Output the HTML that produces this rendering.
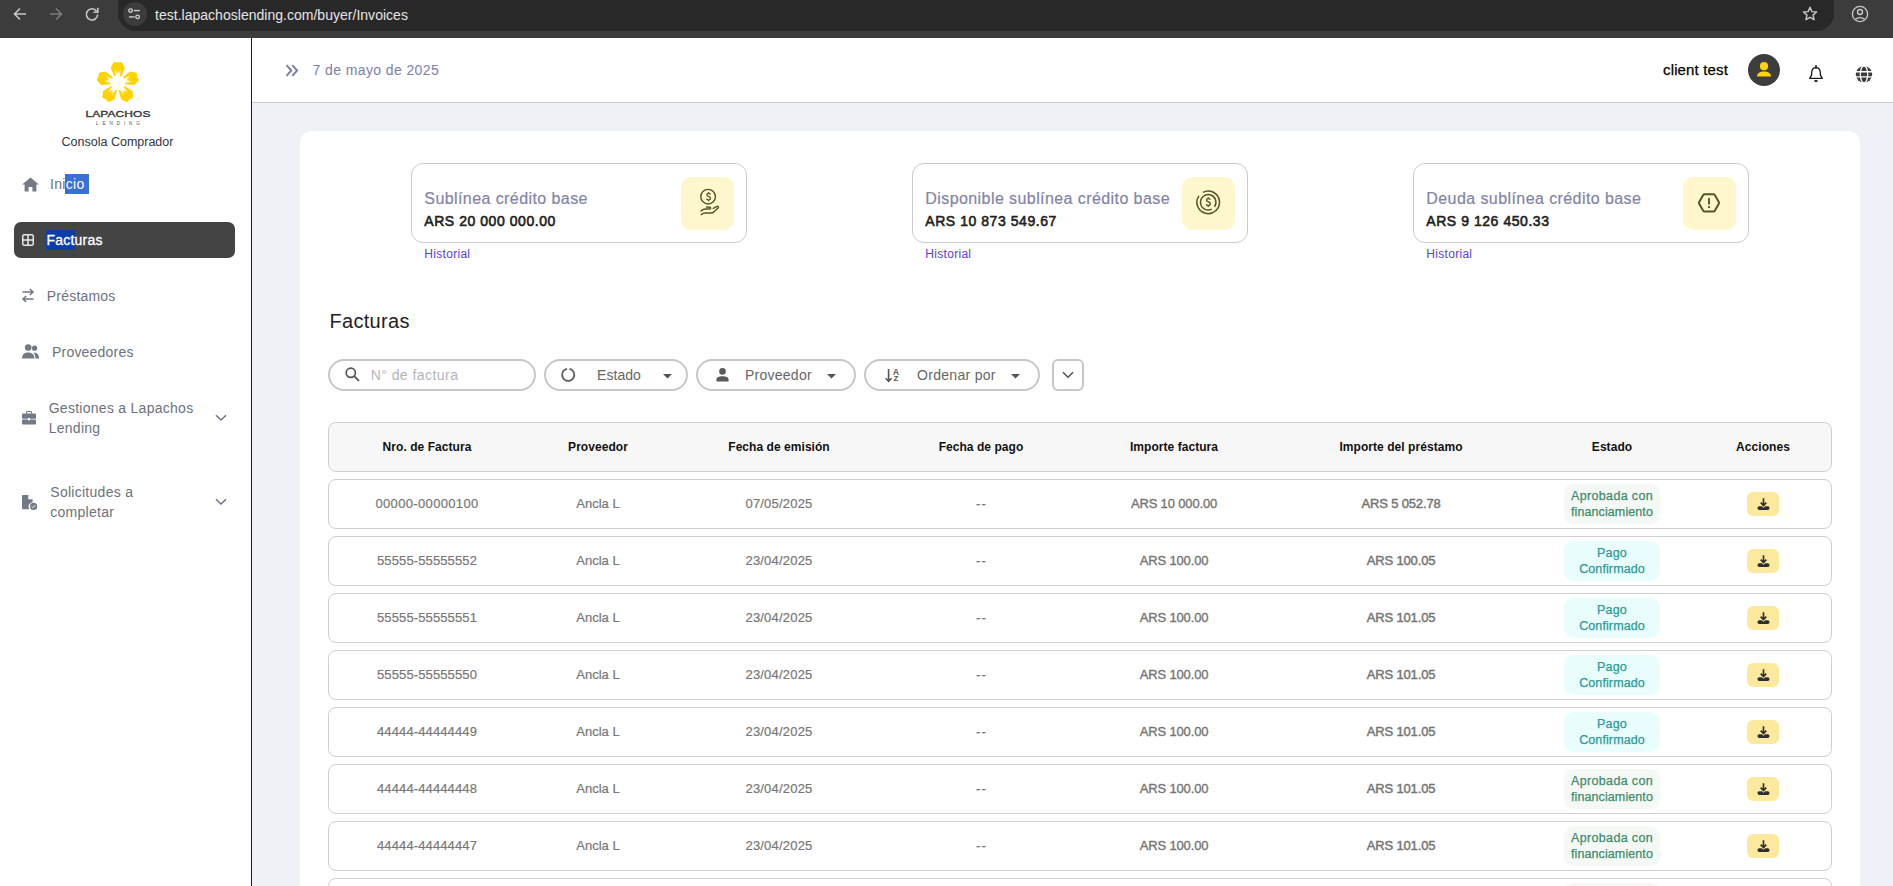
<!DOCTYPE html>
<html><head><meta charset="utf-8">
<style>
*{box-sizing:border-box;margin:0;padding:0}
html,body{width:1893px;height:886px;overflow:hidden;background:#fff;font-family:"Liberation Sans",sans-serif}
.abs{position:absolute}
svg{overflow:visible}
</style></head><body>
<div class="abs" style="left:0px;top:0px;width:1893px;height:38px;background:#3c3c3c"></div>
<div class="abs" style="left:118px;top:-6px;width:1716px;height:37px;background:#282828;border-radius:0 0 18px 18px"></div>
<div class="abs" style="left:123px;top:2px;width:24px;height:24px;background:#3c3c3c;border-radius:50%"></div>
<svg class="abs" style="left:13px;top:7px" width="14" height="14" viewBox="0 0 14 14"><path d="M13 7H2M7 1.5L1.5 7L7 12.5" fill="none" stroke="#c8c8c8" stroke-width="1.6"/></svg>
<svg class="abs" style="left:49px;top:7px" width="14" height="14" viewBox="0 0 14 14"><path d="M1 7H12M7 1.5L12.5 7L7 12.5" fill="none" stroke="#7c7c7c" stroke-width="1.6"/></svg>
<svg class="abs" style="left:85px;top:7px" width="14" height="14" viewBox="0 0 14 14"><path d="M11.6 4.2A5.6 5.6 0 1 0 12.6 7.5" fill="none" stroke="#c8c8c8" stroke-width="1.6"/><path d="M12.8 0.8V5.2H8.4" fill="none" stroke="#c8c8c8" stroke-width="1.6"/></svg>
<svg class="abs" style="left:128px;top:8px" width="14" height="12" viewBox="0 0 14 12"><circle cx="2.6" cy="2.6" r="1.8" fill="none" stroke="#d0d0d0" stroke-width="1.3"/><path d="M6 2.6H11.8" stroke="#d0d0d0" stroke-width="1.4"/><circle cx="9.6" cy="8.9" r="1.8" fill="none" stroke="#d0d0d0" stroke-width="1.3"/><path d="M1 8.9H6.6" stroke="#d0d0d0" stroke-width="1.4"/></svg>
<div class="abs " style="left:155px;top:7.65px;font-size:14px;line-height:14px;white-space:nowrap;color:#e6e6e6;letter-spacing:0.02px">test.lapachoslending.com/buyer/Invoices</div>
<svg class="abs" style="left:1802px;top:6px" width="16" height="16" viewBox="0 0 16 16"><path d="M8 1.2L9.9 5.6L14.6 6L11 9.1L12.1 13.7L8 11.3L3.9 13.7L5 9.1L1.4 6L6.1 5.6Z" fill="none" stroke="#c8c8c8" stroke-width="1.4" stroke-linejoin="round"/></svg>
<svg class="abs" style="left:1851px;top:5px" width="18" height="18" viewBox="0 0 18 18"><circle cx="9" cy="9" r="7.6" fill="none" stroke="#c8c8c8" stroke-width="1.35"/><circle cx="9" cy="7" r="2.5" fill="none" stroke="#c8c8c8" stroke-width="1.35"/><path d="M4.4 14.4C5.6 13.2 7.2 12.6 9 12.6C10.8 12.6 12.4 13.2 13.6 14.4" fill="none" stroke="#c8c8c8" stroke-width="1.4"/></svg>
<div class="abs" style="left:0px;top:38px;width:251px;height:848px;background:#fff"></div>
<div class="abs" style="left:251px;top:38px;width:1px;height:848px;background:#1f1f1f"></div>
<svg class="abs" style="left:0;top:0" width="252" height="130" viewBox="0 0 252 130"><polygon points="114.40,76.90 110.70,67.70 113.90,61.90 117.80,62.50 121.70,61.90 124.90,67.70 121.20,76.90" fill="#ffd200"/><polygon points="122.46,77.81 130.06,71.45 136.57,72.70 137.20,76.60 138.98,80.12 134.45,84.96 124.56,84.28" fill="#ffd200"/><polygon points="124.08,85.76 132.48,91.02 133.30,97.60 129.79,99.40 126.99,102.18 120.99,99.37 118.58,89.75" fill="#ffd200"/><polygon points="117.02,89.75 114.61,99.37 108.61,102.18 105.81,99.40 102.30,97.60 103.12,91.02 111.52,85.76" fill="#ffd200"/><polygon points="111.04,84.28 101.15,84.96 96.62,80.12 98.40,76.60 99.03,72.70 105.54,71.45 113.14,77.81" fill="#ffd200"/><circle cx="117.8" cy="82.9" r="7.4" fill="#fff"/><polygon points="115.77,78.20 117.93,77.78 115.03,68.67" fill="#fff"/><polygon points="116.35,77.99 118.55,77.84 116.93,70.43" fill="#fff"/><polygon points="117.05,77.84 119.25,77.99 118.67,70.43" fill="#fff"/><polygon points="117.67,77.78 119.83,78.20 120.57,68.67" fill="#fff"/><polygon points="121.64,79.51 122.71,81.44 130.48,75.87" fill="#fff"/><polygon points="122.02,80.01 122.85,82.05 129.39,78.22" fill="#fff"/><polygon points="122.39,80.62 122.92,82.76 129.93,79.88" fill="#fff"/><polygon points="122.63,81.20 122.90,83.38 132.19,81.13" fill="#fff"/><polygon points="122.21,85.51 120.71,87.11 128.40,92.79" fill="#fff"/><polygon points="121.86,86.02 120.17,87.44 125.83,92.48" fill="#fff"/><polygon points="121.38,86.56 119.52,87.72 124.42,93.50" fill="#fff"/><polygon points="120.91,86.97 118.92,87.90 123.93,96.04" fill="#fff"/><polygon points="116.68,87.90 114.69,86.97 111.67,96.04" fill="#fff"/><polygon points="116.08,87.72 114.22,86.56 111.18,93.50" fill="#fff"/><polygon points="115.43,87.44 113.74,86.02 109.77,92.48" fill="#fff"/><polygon points="114.89,87.11 113.39,85.51 107.20,92.79" fill="#fff"/><polygon points="112.70,83.38 112.97,81.20 103.41,81.13" fill="#fff"/><polygon points="112.68,82.76 113.21,80.62 105.67,79.88" fill="#fff"/><polygon points="112.75,82.05 113.58,80.01 106.21,78.22" fill="#fff"/><polygon points="112.89,81.44 113.96,79.51 105.12,75.87" fill="#fff"/><circle cx="138.5" cy="98.5" r="1" fill="none" stroke="#f3dc7a" stroke-width="0.5"/></svg>
<div class="abs" style="left:68px;width:100px;text-align:center;top:109.1px;font-size:9.8px;line-height:9.8px;color:#3a3a3a;letter-spacing:0.1px;-webkit-text-stroke:0.4px #3a3a3a;transform:scaleX(1.22)">LAPACHOS</div>
<div class="abs" style="left:-32.0px;width:300px;text-align:center;top:121.51px;font-size:4.6px;line-height:4.6px;white-space:nowrap;color:#555;letter-spacing:3.9px;padding-left:3.9px">LENDING</div>
<div class="abs" style="left:-32.5px;width:300px;text-align:center;top:135.62px;font-size:12.5px;line-height:12.5px;white-space:nowrap;color:#2f3542;letter-spacing:0px">Consola Comprador</div>
<svg class="abs" style="left:21.5px;top:176.5px" width="17" height="15" viewBox="0 0 17 15"><path d="M8.5 0.4L0.2 7.6H2.6V14.4H6.6V9.9H10.4V14.4H14.4V7.6H16.8Z" fill="#737985"/></svg>
<div class="abs" style="left:65px;top:174px;width:24px;height:20px;background:#3a6fd8"></div>
<div class="abs " style="left:50px;top:176.95px;font-size:14px;line-height:14px;white-space:nowrap;color:#6b7280;letter-spacing:0.3px">Ini<span style="color:#fff">cio</span></div>
<div class="abs" style="left:14px;top:222px;width:221px;height:36px;background:#444444;border-radius:7px"></div>
<div class="abs" style="left:46px;top:230px;width:29px;height:20px;background:#0c3ea9"></div>
<svg class="abs" style="left:22px;top:234px" width="12" height="12" viewBox="0 0 12 12"><rect x="0.75" y="0.75" width="10.5" height="10.5" rx="1.6" fill="none" stroke="#e8e8e8" stroke-width="1.5"/><path d="M6 1V11M1 6H11" stroke="#e8e8e8" stroke-width="1.5"/></svg>
<div class="abs " style="left:46.6px;top:233.15px;font-size:14px;line-height:14px;white-space:nowrap;color:#fff;letter-spacing:0.2px;-webkit-text-stroke:0.3px #fff">Facturas</div>
<svg class="abs" style="left:21px;top:288px" width="14" height="15" viewBox="0 0 14 15"><path d="M1.5 4H12M8.8 1L12 4L8.8 7" fill="none" stroke="#737985" stroke-width="1.6"/><path d="M12.5 11H2M5.2 8L2 11L5.2 14" fill="none" stroke="#737985" stroke-width="1.6"/></svg>
<div class="abs " style="left:46.8px;top:289.15px;font-size:14px;line-height:14px;white-space:nowrap;color:#6b7280;letter-spacing:0.2px">Préstamos</div>
<svg class="abs" style="left:22px;top:344px" width="18" height="15" viewBox="0 0 18 15"><circle cx="6.2" cy="3.6" r="3.3" fill="#737985"/><circle cx="12.6" cy="4.2" r="2.6" fill="#737985"/><path d="M0 14.6C0 10.6 2.6 8.6 6.2 8.6C9.8 8.6 12.4 10.6 12.4 14.6Z" fill="#737985"/><path d="M11.6 8.8C14.8 8.6 17.2 10.4 17.2 14.6H13.4C13.4 12 12.8 10.2 11.6 8.8Z" fill="#737985"/></svg>
<div class="abs " style="left:52px;top:344.85px;font-size:14px;line-height:14px;white-space:nowrap;color:#6b7280;letter-spacing:0.2px">Proveedores</div>
<svg class="abs" style="left:22px;top:411px" width="14" height="14" viewBox="0 0 14 14"><path d="M4.5 2.6V1.4C4.5 0.8 4.9 0.5 5.4 0.5H8.6C9.1 0.5 9.5 0.8 9.5 1.4V2.6" fill="none" stroke="#737985" stroke-width="1.2"/><rect x="0" y="2.6" width="14" height="5.2" rx="1" fill="#737985"/><rect x="0" y="8.6" width="14" height="5" rx="1" fill="#737985"/><rect x="6" y="7" width="2" height="2.4" fill="#fff"/></svg>
<div class="abs " style="left:48.7px;top:401.15px;font-size:14px;line-height:14px;white-space:nowrap;color:#6b7280;letter-spacing:0.27px">Gestiones a Lapachos</div>
<div class="abs " style="left:48.7px;top:420.95px;font-size:14px;line-height:14px;white-space:nowrap;color:#6b7280;letter-spacing:0.27px">Lending</div>
<svg class="abs" style="left:215px;top:414px" width="12" height="8" viewBox="0 0 12 8"><path d="M1 1.2L6 6L11 1.2" fill="none" stroke="#6b7280" stroke-width="1.5"/></svg>
<svg class="abs" style="left:22px;top:494.6px" width="17" height="16" viewBox="0 0 17 16"><path d="M0 1.2C0 0.5 0.5 0 1.2 0H6.6L10.6 4V7.2A4.4 4.4 0 0 0 7.4 14.2H1.2C0.5 14.2 0 13.7 0 13Z" fill="#737985"/><path d="M6.6 0V4H10.6" fill="#fff" stroke="#fff" stroke-width="0.6"/><circle cx="11.6" cy="11.4" r="3.6" fill="#737985"/><path d="M9.9 11.4L11.1 12.6L13.3 10.2" fill="none" stroke="#fff" stroke-width="1"/></svg>
<div class="abs " style="left:50.3px;top:484.75px;font-size:14px;line-height:14px;white-space:nowrap;color:#6b7280;letter-spacing:0.27px">Solicitudes a</div>
<div class="abs " style="left:50.3px;top:504.55px;font-size:14px;line-height:14px;white-space:nowrap;color:#6b7280;letter-spacing:0.27px">completar</div>
<svg class="abs" style="left:215px;top:498px" width="12" height="8" viewBox="0 0 12 8"><path d="M1 1.2L6 6L11 1.2" fill="none" stroke="#6b7280" stroke-width="1.5"/></svg>
<div class="abs" style="left:252px;top:38px;width:1641px;height:64px;background:#fff"></div>
<div class="abs" style="left:252px;top:102px;width:1641px;height:1px;background:#cdcdcd"></div>
<svg class="abs" style="left:285px;top:63.6px" width="14" height="13" viewBox="0 0 14 13"><path d="M1.5 1.2L6.3 6.5L1.5 11.8M7.3 1.2L12.1 6.5L7.3 11.8" fill="none" stroke="#7d80a8" stroke-width="2"/></svg>
<div class="abs " style="left:312.5px;top:63.15px;font-size:14px;line-height:14px;white-space:nowrap;color:#7d80a8;letter-spacing:0.4px">7 de mayo de 2025</div>
<div class="abs " style="left:1663px;top:61.90px;font-size:15px;line-height:15px;white-space:nowrap;color:#000;letter-spacing:0.15px;-webkit-text-stroke:0.25px #000">client test</div>
<div class="abs" style="left:1748px;top:54px;width:32px;height:32px;background:#3d3d3d;border-radius:50%"></div>
<svg class="abs" style="left:1757px;top:62px" width="14" height="16" viewBox="0 0 14 16"><circle cx="7" cy="4.2" r="4.1" fill="#ffd400"/><path d="M0 14.6C0 11 3 9.4 7 9.4C11 9.4 14 11 14 14.6Z" fill="#ffd400"/></svg>
<svg class="abs" style="left:1808px;top:65px" width="16" height="18" viewBox="0 0 16 18"><path d="M8 2.6C5.4 2.6 3.9 4.6 3.7 7.2L3.5 10.4L1.6 13.3H14.4L12.5 10.4L12.3 7.2C12.1 4.6 10.6 2.6 8 2.6Z" fill="none" stroke="#1a1a1a" stroke-width="1.35" stroke-linejoin="round"/><path d="M8 0.9V2.8" stroke="#1a1a1a" stroke-width="1.7" stroke-linecap="round"/><ellipse cx="8" cy="15.9" rx="1.9" ry="1" fill="#1a1a1a"/></svg>
<svg class="abs" style="left:1856px;top:65.6px" width="16" height="17" viewBox="0 0 16 17"><circle cx="8" cy="8.35" r="8.2" fill="#3a3a3a"/><path d="M-1 5.7H17M-1 10.9H17" stroke="#fff" stroke-width="1.35"/><ellipse cx="8" cy="8.35" rx="3.7" ry="8.6" fill="none" stroke="#fff" stroke-width="1.3"/></svg>
<div class="abs" style="left:252px;top:103px;width:1641px;height:783px;background:#eef2f7"></div>
<div class="abs" style="left:300px;top:131px;width:1560px;height:800px;background:#fff;border-radius:12px"></div>
<div class="abs" style="left:411px;top:163px;width:336px;height:80px;background:#fff;border:1px solid #cbcbcb;border-radius:12px"></div>
<div class="abs" style="left:680.5px;top:176.5px;width:53.5px;height:53px;background:#fef7cd;border-radius:10px"></div>
<svg class="abs" style="left:700px;top:189px" width="20" height="27" viewBox="0 0 20 27"><circle cx="8.1" cy="7.7" r="7.3" fill="none" stroke="#5a5128" stroke-width="1.4"/><path d="M10.6 5.3C10.2 4.7 9.5 4.3 8.6 4.3C7.5 4.3 6.8 4.9 6.8 5.8C6.8 6.7 7.6 7.1 8.6 7.4C9.6 7.7 10.5 8.1 10.5 9.2C10.5 10.1 9.7 10.8 8.6 10.8C7.6 10.8 6.9 10.4 6.5 9.8M8.6 3V4.3M8.6 10.8V12.2" fill="none" stroke="#5a5128" stroke-width="1.25"/><path d="M1 22C2.4 20.6 3.8 20 5.4 20H9.6C10.6 20 11 19 10.2 18.4C9.6 18 8.2 18 6.4 18M1.2 25.6C2.6 24.4 3.8 24 5.2 24H10.8C12 24 13.2 23.4 14.2 22.6L18.2 19C19 18.2 18.2 17 17.2 17.4L13.2 19.4" fill="none" stroke="#5a5128" stroke-width="1.4" stroke-linecap="round" stroke-linejoin="round"/></svg>
<div class="abs " style="left:424.3px;top:191.26px;font-size:16px;line-height:16px;white-space:nowrap;color:#8284a8;letter-spacing:0.42px;-webkit-text-stroke:0.2px #8284a8">Sublínea crédito base</div>
<div class="abs " style="left:424.3px;top:213.65px;font-size:14px;line-height:14px;white-space:nowrap;color:#1f1f1f;letter-spacing:0.55px;-webkit-text-stroke:0.6px #1f1f1f">ARS 20 000 000.00</div>
<div class="abs " style="left:424.3px;top:247.54px;font-size:12px;line-height:12px;white-space:nowrap;color:#5a3edc;letter-spacing:0.3px">Historial</div>
<div class="abs" style="left:912px;top:163px;width:336px;height:80px;background:#fff;border:1px solid #cbcbcb;border-radius:12px"></div>
<div class="abs" style="left:1181.5px;top:176.5px;width:53.5px;height:53px;background:#fef7cd;border-radius:10px"></div>
<svg class="abs" style="left:1196px;top:190px" width="25" height="25" viewBox="0 0 25 25"><path d="M6.89 2.32A11.3 11.3 0 1 1 2.94 5.82" fill="none" stroke="#5a5128" stroke-width="1.5"/><path d="M15.81 19.10A7.7 7.7 0 1 1 18.51 16.72" fill="none" stroke="#5a5128" stroke-width="1.5"/><path d="M14.3 9.6C13.9 9 13.2 8.6 12.3 8.6C11.2 8.6 10.4 9.2 10.4 10.1C10.4 11.1 11.3 11.5 12.3 11.8C13.4 12.1 14.3 12.6 14.3 13.7C14.3 14.7 13.4 15.4 12.3 15.4C11.3 15.4 10.5 15 10.1 14.3M12.2 7.2V8.6M12.2 15.4V17" fill="none" stroke="#5a5128" stroke-width="1.4"/></svg>
<div class="abs " style="left:925.3px;top:191.26px;font-size:16px;line-height:16px;white-space:nowrap;color:#8284a8;letter-spacing:0.42px;-webkit-text-stroke:0.2px #8284a8">Disponible sublínea crédito base</div>
<div class="abs " style="left:925.3px;top:213.65px;font-size:14px;line-height:14px;white-space:nowrap;color:#1f1f1f;letter-spacing:0.55px;-webkit-text-stroke:0.6px #1f1f1f">ARS 10 873 549.67</div>
<div class="abs " style="left:925.3px;top:247.54px;font-size:12px;line-height:12px;white-space:nowrap;color:#5a3edc;letter-spacing:0.3px">Historial</div>
<div class="abs" style="left:1413px;top:163px;width:336px;height:80px;background:#fff;border:1px solid #cbcbcb;border-radius:12px"></div>
<div class="abs" style="left:1682.5px;top:176.5px;width:53.5px;height:53px;background:#fef7cd;border-radius:10px"></div>
<svg class="abs" style="left:1697.5px;top:193px" width="22" height="20" viewBox="0 0 22 20"><path d="M6.6 1.2H15.4C16 1.2 16.5 1.5 16.8 2L20.8 9C21.1 9.6 21.1 10.2 20.8 10.8L16.8 17.8C16.5 18.3 16 18.6 15.4 18.6H6.6C6 18.6 5.5 18.3 5.2 17.8L1.2 10.8C0.9 10.2 0.9 9.6 1.2 9L5.2 2C5.5 1.5 6 1.2 6.6 1.2Z" fill="none" stroke="#5a5128" stroke-width="2"/><path d="M11 5.6V10.8" stroke="#5a5128" stroke-width="1.9" stroke-linecap="round"/><circle cx="11" cy="14.2" r="1.1" fill="#5a5128"/></svg>
<div class="abs " style="left:1426.3px;top:191.26px;font-size:16px;line-height:16px;white-space:nowrap;color:#8284a8;letter-spacing:0.42px;-webkit-text-stroke:0.2px #8284a8">Deuda sublínea crédito base</div>
<div class="abs " style="left:1426.3px;top:213.65px;font-size:14px;line-height:14px;white-space:nowrap;color:#1f1f1f;letter-spacing:0.55px;-webkit-text-stroke:0.6px #1f1f1f">ARS 9 126 450.33</div>
<div class="abs " style="left:1426.3px;top:247.54px;font-size:12px;line-height:12px;white-space:nowrap;color:#5a3edc;letter-spacing:0.3px">Historial</div>
<div class="abs " style="left:329.5px;top:310.67px;font-size:20px;line-height:20px;white-space:nowrap;color:#222;letter-spacing:0.3px">Facturas</div>
<div class="abs" style="left:328px;top:359px;width:208px;height:32px;background:#fff;border:2px solid #c7c7c7;border-radius:16px"></div>
<svg class="abs" style="left:345px;top:367px" width="15" height="15" viewBox="0 0 15 15"><circle cx="5.8" cy="5.8" r="4.6" fill="none" stroke="#555" stroke-width="1.7"/><path d="M9.2 9.2L13.4 13.4" stroke="#555" stroke-width="1.8" stroke-linecap="round"/></svg>
<div class="abs " style="left:370.7px;top:368.15px;font-size:14px;line-height:14px;white-space:nowrap;color:#b4b4bc;letter-spacing:0.45px">N° de factura</div>
<div class="abs" style="left:544px;top:359px;width:144px;height:32px;background:#fff;border:2px solid #c7c7c7;border-radius:16px"></div>
<svg class="abs" style="left:560px;top:367px" width="16" height="16" viewBox="0 0 16 16"><path d="M9.47 1.83A6.1 6.1 0 1 1 6.93 1.83" fill="none" stroke="#606060" stroke-width="1.8"/></svg>
<div class="abs " style="left:597px;top:367.85px;font-size:14px;line-height:14px;white-space:nowrap;color:#666;letter-spacing:0.05px">Estado</div>
<svg class="abs" style="left:662.5px;top:373.6px" width="9" height="5" viewBox="0 0 9 5"><path d="M0 0H9L4.5 4.6Z" fill="#555"/></svg>
<div class="abs" style="left:696px;top:359px;width:160px;height:32px;background:#fff;border:2px solid #c7c7c7;border-radius:16px"></div>
<svg class="abs" style="left:716px;top:368px" width="13" height="14" viewBox="0 0 13 14"><circle cx="6.5" cy="3.4" r="3.3" fill="#5a5a5a"/><path d="M0.4 13.6V12C0.4 9.2 3 8.2 6.5 8.2C10 8.2 12.6 9.2 12.6 12V13.6Z" fill="#5a5a5a"/></svg>
<div class="abs " style="left:745px;top:367.85px;font-size:14px;line-height:14px;white-space:nowrap;color:#666;letter-spacing:0.25px">Proveedor</div>
<svg class="abs" style="left:826.5px;top:373.6px" width="9" height="5" viewBox="0 0 9 5"><path d="M0 0H9L4.5 4.6Z" fill="#555"/></svg>
<div class="abs" style="left:864px;top:359px;width:176px;height:32px;background:#fff;border:2px solid #c7c7c7;border-radius:16px"></div>
<svg class="abs" style="left:885px;top:368px" width="16" height="15" viewBox="0 0 16 15"><path d="M3.6 1V13.2M0.7 10.3L3.6 13.4L6.5 10.3" fill="none" stroke="#555" stroke-width="1.6"/><text x="8.1" y="6.8" font-family="Liberation Sans" font-weight="bold" font-size="8.4" fill="#555">A</text><text x="8.5" y="13.3" font-family="Liberation Sans" font-weight="bold" font-size="8" fill="#555">Z</text></svg>
<div class="abs " style="left:917px;top:367.85px;font-size:14px;line-height:14px;white-space:nowrap;color:#666;letter-spacing:0.3px">Ordenar por</div>
<svg class="abs" style="left:1010.5px;top:373.6px" width="9" height="5" viewBox="0 0 9 5"><path d="M0 0H9L4.5 4.6Z" fill="#555"/></svg>
<div class="abs" style="left:1052px;top:359px;width:32px;height:32px;background:#fff;border:2px solid #c7c7c7;border-radius:6px"></div>
<svg class="abs" style="left:1062px;top:371px" width="12" height="8" viewBox="0 0 12 8"><path d="M1 1.2L6 6.2L11 1.2" fill="none" stroke="#555" stroke-width="1.6"/></svg>
<div class="abs" style="left:328px;top:422px;width:1504px;height:50px;background:#f7f7f7;border:1px solid #cfcfcf;border-radius:8px"></div>
<div class="abs" style="left:277.0px;width:300px;text-align:center;top:440.84px;font-size:12px;line-height:12px;white-space:nowrap;color:#111;font-weight:bold;letter-spacing:0.05px">Nro. de Factura</div>
<div class="abs" style="left:448.0px;width:300px;text-align:center;top:440.84px;font-size:12px;line-height:12px;white-space:nowrap;color:#111;font-weight:bold;letter-spacing:0.05px">Proveedor</div>
<div class="abs" style="left:629.0px;width:300px;text-align:center;top:440.84px;font-size:12px;line-height:12px;white-space:nowrap;color:#111;font-weight:bold;letter-spacing:0.05px">Fecha de emisión</div>
<div class="abs" style="left:831.0px;width:300px;text-align:center;top:440.84px;font-size:12px;line-height:12px;white-space:nowrap;color:#111;font-weight:bold;letter-spacing:0.05px">Fecha de pago</div>
<div class="abs" style="left:1024.0px;width:300px;text-align:center;top:440.84px;font-size:12px;line-height:12px;white-space:nowrap;color:#111;font-weight:bold;letter-spacing:0.05px">Importe factura</div>
<div class="abs" style="left:1251.0px;width:300px;text-align:center;top:440.84px;font-size:12px;line-height:12px;white-space:nowrap;color:#111;font-weight:bold;letter-spacing:0.05px">Importe del préstamo</div>
<div class="abs" style="left:1462.0px;width:300px;text-align:center;top:440.84px;font-size:12px;line-height:12px;white-space:nowrap;color:#111;font-weight:bold;letter-spacing:0.05px">Estado</div>
<div class="abs" style="left:1613.0px;width:300px;text-align:center;top:440.84px;font-size:12px;line-height:12px;white-space:nowrap;color:#111;font-weight:bold;letter-spacing:0.05px">Acciones</div>
<div class="abs" style="left:328px;top:479px;width:1504px;height:50px;background:#fff;border:1px solid #cfcfcf;border-radius:8px"></div>
<div class="abs" style="left:277.0px;width:300px;text-align:center;top:496.80px;font-size:13px;line-height:13px;white-space:nowrap;color:#777;letter-spacing:0.35px;-webkit-text-stroke:0.2px #777">00000-00000100</div>
<div class="abs" style="left:448.0px;width:300px;text-align:center;top:496.80px;font-size:13px;line-height:13px;white-space:nowrap;color:#777;-webkit-text-stroke:0.2px #777">Ancla L</div>
<div class="abs" style="left:629.0px;width:300px;text-align:center;top:496.80px;font-size:13px;line-height:13px;white-space:nowrap;color:#777;letter-spacing:0.2px;-webkit-text-stroke:0.2px #777">07/05/2025</div>
<div class="abs" style="left:831.0px;width:300px;text-align:center;top:496.80px;font-size:13px;line-height:13px;white-space:nowrap;color:#777;letter-spacing:1.2px;padding-left:1.2px;-webkit-text-stroke:0.3px #777">--</div>
<div class="abs" style="left:1024.0px;width:300px;text-align:center;top:496.80px;font-size:13px;line-height:13px;white-space:nowrap;color:#757575;letter-spacing:-0.15px;-webkit-text-stroke:0.35px #757575">ARS 10 000.00</div>
<div class="abs" style="left:1251.0px;width:300px;text-align:center;top:496.80px;font-size:13px;line-height:13px;white-space:nowrap;color:#757575;letter-spacing:-0.15px;-webkit-text-stroke:0.45px #757575">ARS 5 052.78</div>
<div class="abs" style="left:1564px;top:484px;width:96px;height:40px;background:#f5f9f6;border-radius:9px"></div>
<div class="abs" style="left:1462.0px;width:300px;text-align:center;top:489.92px;font-size:12.5px;line-height:12.5px;white-space:nowrap;color:#3f8b6c;letter-spacing:0.35px;-webkit-text-stroke:0.25px #3f8b6c">Aprobada con</div>
<div class="abs" style="left:1462.0px;width:300px;text-align:center;top:506.02px;font-size:12.5px;line-height:12.5px;white-space:nowrap;color:#3f8b6c;letter-spacing:0.1px;-webkit-text-stroke:0.25px #3f8b6c">financiamiento</div>
<div class="abs" style="left:1747px;top:492px;width:32px;height:24px;background:#fde99d;border-radius:6px"></div>
<svg class="abs" style="left:1756.5px;top:497px" width="13" height="12" viewBox="0 0 13 12"><path d="M6.5 1.2V8.4M3.7 5.7L6.5 8.5L9.3 5.7" fill="none" stroke="#2e2e32" stroke-width="1.65"/><path d="M2.3 9.2H4.8L6.5 10.7L8.2 9.2H10.7A1.85 1.85 0 0 1 10.7 12.9H2.3A1.85 1.85 0 0 1 2.3 9.2Z" fill="#2e2e32"/></svg>
<div class="abs" style="left:328px;top:536px;width:1504px;height:50px;background:#fff;border:1px solid #cfcfcf;border-radius:8px"></div>
<div class="abs" style="left:277.0px;width:300px;text-align:center;top:553.80px;font-size:13px;line-height:13px;white-space:nowrap;color:#777;letter-spacing:0.12px;-webkit-text-stroke:0.2px #777">55555-55555552</div>
<div class="abs" style="left:448.0px;width:300px;text-align:center;top:553.80px;font-size:13px;line-height:13px;white-space:nowrap;color:#777;-webkit-text-stroke:0.2px #777">Ancla L</div>
<div class="abs" style="left:629.0px;width:300px;text-align:center;top:553.80px;font-size:13px;line-height:13px;white-space:nowrap;color:#777;letter-spacing:0.2px;-webkit-text-stroke:0.2px #777">23/04/2025</div>
<div class="abs" style="left:831.0px;width:300px;text-align:center;top:553.80px;font-size:13px;line-height:13px;white-space:nowrap;color:#777;letter-spacing:1.2px;padding-left:1.2px;-webkit-text-stroke:0.3px #777">--</div>
<div class="abs" style="left:1024.0px;width:300px;text-align:center;top:553.80px;font-size:13px;line-height:13px;white-space:nowrap;color:#757575;letter-spacing:-0.15px;-webkit-text-stroke:0.35px #757575">ARS 100.00</div>
<div class="abs" style="left:1251.0px;width:300px;text-align:center;top:553.80px;font-size:13px;line-height:13px;white-space:nowrap;color:#757575;letter-spacing:-0.15px;-webkit-text-stroke:0.45px #757575">ARS 100.05</div>
<div class="abs" style="left:1564px;top:541px;width:96px;height:40px;background:#eafdfd;border-radius:9px"></div>
<div class="abs" style="left:1462.0px;width:300px;text-align:center;top:547.42px;font-size:12.5px;line-height:12.5px;white-space:nowrap;color:#2a9b97;letter-spacing:0.2px;-webkit-text-stroke:0.25px #2a9b97">Pago</div>
<div class="abs" style="left:1462.0px;width:300px;text-align:center;top:563.02px;font-size:12.5px;line-height:12.5px;white-space:nowrap;color:#2a9b97;letter-spacing:0.1px;-webkit-text-stroke:0.25px #2a9b97">Confirmado</div>
<div class="abs" style="left:1747px;top:549px;width:32px;height:24px;background:#fde99d;border-radius:6px"></div>
<svg class="abs" style="left:1756.5px;top:554px" width="13" height="12" viewBox="0 0 13 12"><path d="M6.5 1.2V8.4M3.7 5.7L6.5 8.5L9.3 5.7" fill="none" stroke="#2e2e32" stroke-width="1.65"/><path d="M2.3 9.2H4.8L6.5 10.7L8.2 9.2H10.7A1.85 1.85 0 0 1 10.7 12.9H2.3A1.85 1.85 0 0 1 2.3 9.2Z" fill="#2e2e32"/></svg>
<div class="abs" style="left:328px;top:593px;width:1504px;height:50px;background:#fff;border:1px solid #cfcfcf;border-radius:8px"></div>
<div class="abs" style="left:277.0px;width:300px;text-align:center;top:610.80px;font-size:13px;line-height:13px;white-space:nowrap;color:#777;letter-spacing:0.12px;-webkit-text-stroke:0.2px #777">55555-55555551</div>
<div class="abs" style="left:448.0px;width:300px;text-align:center;top:610.80px;font-size:13px;line-height:13px;white-space:nowrap;color:#777;-webkit-text-stroke:0.2px #777">Ancla L</div>
<div class="abs" style="left:629.0px;width:300px;text-align:center;top:610.80px;font-size:13px;line-height:13px;white-space:nowrap;color:#777;letter-spacing:0.2px;-webkit-text-stroke:0.2px #777">23/04/2025</div>
<div class="abs" style="left:831.0px;width:300px;text-align:center;top:610.80px;font-size:13px;line-height:13px;white-space:nowrap;color:#777;letter-spacing:1.2px;padding-left:1.2px;-webkit-text-stroke:0.3px #777">--</div>
<div class="abs" style="left:1024.0px;width:300px;text-align:center;top:610.80px;font-size:13px;line-height:13px;white-space:nowrap;color:#757575;letter-spacing:-0.15px;-webkit-text-stroke:0.35px #757575">ARS 100.00</div>
<div class="abs" style="left:1251.0px;width:300px;text-align:center;top:610.80px;font-size:13px;line-height:13px;white-space:nowrap;color:#757575;letter-spacing:-0.15px;-webkit-text-stroke:0.45px #757575">ARS 101.05</div>
<div class="abs" style="left:1564px;top:598px;width:96px;height:40px;background:#eafdfd;border-radius:9px"></div>
<div class="abs" style="left:1462.0px;width:300px;text-align:center;top:604.42px;font-size:12.5px;line-height:12.5px;white-space:nowrap;color:#2a9b97;letter-spacing:0.2px;-webkit-text-stroke:0.25px #2a9b97">Pago</div>
<div class="abs" style="left:1462.0px;width:300px;text-align:center;top:620.02px;font-size:12.5px;line-height:12.5px;white-space:nowrap;color:#2a9b97;letter-spacing:0.1px;-webkit-text-stroke:0.25px #2a9b97">Confirmado</div>
<div class="abs" style="left:1747px;top:606px;width:32px;height:24px;background:#fde99d;border-radius:6px"></div>
<svg class="abs" style="left:1756.5px;top:611px" width="13" height="12" viewBox="0 0 13 12"><path d="M6.5 1.2V8.4M3.7 5.7L6.5 8.5L9.3 5.7" fill="none" stroke="#2e2e32" stroke-width="1.65"/><path d="M2.3 9.2H4.8L6.5 10.7L8.2 9.2H10.7A1.85 1.85 0 0 1 10.7 12.9H2.3A1.85 1.85 0 0 1 2.3 9.2Z" fill="#2e2e32"/></svg>
<div class="abs" style="left:328px;top:650px;width:1504px;height:50px;background:#fff;border:1px solid #cfcfcf;border-radius:8px"></div>
<div class="abs" style="left:277.0px;width:300px;text-align:center;top:667.80px;font-size:13px;line-height:13px;white-space:nowrap;color:#777;letter-spacing:0.12px;-webkit-text-stroke:0.2px #777">55555-55555550</div>
<div class="abs" style="left:448.0px;width:300px;text-align:center;top:667.80px;font-size:13px;line-height:13px;white-space:nowrap;color:#777;-webkit-text-stroke:0.2px #777">Ancla L</div>
<div class="abs" style="left:629.0px;width:300px;text-align:center;top:667.80px;font-size:13px;line-height:13px;white-space:nowrap;color:#777;letter-spacing:0.2px;-webkit-text-stroke:0.2px #777">23/04/2025</div>
<div class="abs" style="left:831.0px;width:300px;text-align:center;top:667.80px;font-size:13px;line-height:13px;white-space:nowrap;color:#777;letter-spacing:1.2px;padding-left:1.2px;-webkit-text-stroke:0.3px #777">--</div>
<div class="abs" style="left:1024.0px;width:300px;text-align:center;top:667.80px;font-size:13px;line-height:13px;white-space:nowrap;color:#757575;letter-spacing:-0.15px;-webkit-text-stroke:0.35px #757575">ARS 100.00</div>
<div class="abs" style="left:1251.0px;width:300px;text-align:center;top:667.80px;font-size:13px;line-height:13px;white-space:nowrap;color:#757575;letter-spacing:-0.15px;-webkit-text-stroke:0.45px #757575">ARS 101.05</div>
<div class="abs" style="left:1564px;top:655px;width:96px;height:40px;background:#eafdfd;border-radius:9px"></div>
<div class="abs" style="left:1462.0px;width:300px;text-align:center;top:661.42px;font-size:12.5px;line-height:12.5px;white-space:nowrap;color:#2a9b97;letter-spacing:0.2px;-webkit-text-stroke:0.25px #2a9b97">Pago</div>
<div class="abs" style="left:1462.0px;width:300px;text-align:center;top:677.02px;font-size:12.5px;line-height:12.5px;white-space:nowrap;color:#2a9b97;letter-spacing:0.1px;-webkit-text-stroke:0.25px #2a9b97">Confirmado</div>
<div class="abs" style="left:1747px;top:663px;width:32px;height:24px;background:#fde99d;border-radius:6px"></div>
<svg class="abs" style="left:1756.5px;top:668px" width="13" height="12" viewBox="0 0 13 12"><path d="M6.5 1.2V8.4M3.7 5.7L6.5 8.5L9.3 5.7" fill="none" stroke="#2e2e32" stroke-width="1.65"/><path d="M2.3 9.2H4.8L6.5 10.7L8.2 9.2H10.7A1.85 1.85 0 0 1 10.7 12.9H2.3A1.85 1.85 0 0 1 2.3 9.2Z" fill="#2e2e32"/></svg>
<div class="abs" style="left:328px;top:707px;width:1504px;height:50px;background:#fff;border:1px solid #cfcfcf;border-radius:8px"></div>
<div class="abs" style="left:277.0px;width:300px;text-align:center;top:724.80px;font-size:13px;line-height:13px;white-space:nowrap;color:#777;letter-spacing:0.12px;-webkit-text-stroke:0.2px #777">44444-44444449</div>
<div class="abs" style="left:448.0px;width:300px;text-align:center;top:724.80px;font-size:13px;line-height:13px;white-space:nowrap;color:#777;-webkit-text-stroke:0.2px #777">Ancla L</div>
<div class="abs" style="left:629.0px;width:300px;text-align:center;top:724.80px;font-size:13px;line-height:13px;white-space:nowrap;color:#777;letter-spacing:0.2px;-webkit-text-stroke:0.2px #777">23/04/2025</div>
<div class="abs" style="left:831.0px;width:300px;text-align:center;top:724.80px;font-size:13px;line-height:13px;white-space:nowrap;color:#777;letter-spacing:1.2px;padding-left:1.2px;-webkit-text-stroke:0.3px #777">--</div>
<div class="abs" style="left:1024.0px;width:300px;text-align:center;top:724.80px;font-size:13px;line-height:13px;white-space:nowrap;color:#757575;letter-spacing:-0.15px;-webkit-text-stroke:0.35px #757575">ARS 100.00</div>
<div class="abs" style="left:1251.0px;width:300px;text-align:center;top:724.80px;font-size:13px;line-height:13px;white-space:nowrap;color:#757575;letter-spacing:-0.15px;-webkit-text-stroke:0.45px #757575">ARS 101.05</div>
<div class="abs" style="left:1564px;top:712px;width:96px;height:40px;background:#eafdfd;border-radius:9px"></div>
<div class="abs" style="left:1462.0px;width:300px;text-align:center;top:718.42px;font-size:12.5px;line-height:12.5px;white-space:nowrap;color:#2a9b97;letter-spacing:0.2px;-webkit-text-stroke:0.25px #2a9b97">Pago</div>
<div class="abs" style="left:1462.0px;width:300px;text-align:center;top:734.02px;font-size:12.5px;line-height:12.5px;white-space:nowrap;color:#2a9b97;letter-spacing:0.1px;-webkit-text-stroke:0.25px #2a9b97">Confirmado</div>
<div class="abs" style="left:1747px;top:720px;width:32px;height:24px;background:#fde99d;border-radius:6px"></div>
<svg class="abs" style="left:1756.5px;top:725px" width="13" height="12" viewBox="0 0 13 12"><path d="M6.5 1.2V8.4M3.7 5.7L6.5 8.5L9.3 5.7" fill="none" stroke="#2e2e32" stroke-width="1.65"/><path d="M2.3 9.2H4.8L6.5 10.7L8.2 9.2H10.7A1.85 1.85 0 0 1 10.7 12.9H2.3A1.85 1.85 0 0 1 2.3 9.2Z" fill="#2e2e32"/></svg>
<div class="abs" style="left:328px;top:764px;width:1504px;height:50px;background:#fff;border:1px solid #cfcfcf;border-radius:8px"></div>
<div class="abs" style="left:277.0px;width:300px;text-align:center;top:781.80px;font-size:13px;line-height:13px;white-space:nowrap;color:#777;letter-spacing:0.12px;-webkit-text-stroke:0.2px #777">44444-44444448</div>
<div class="abs" style="left:448.0px;width:300px;text-align:center;top:781.80px;font-size:13px;line-height:13px;white-space:nowrap;color:#777;-webkit-text-stroke:0.2px #777">Ancla L</div>
<div class="abs" style="left:629.0px;width:300px;text-align:center;top:781.80px;font-size:13px;line-height:13px;white-space:nowrap;color:#777;letter-spacing:0.2px;-webkit-text-stroke:0.2px #777">23/04/2025</div>
<div class="abs" style="left:831.0px;width:300px;text-align:center;top:781.80px;font-size:13px;line-height:13px;white-space:nowrap;color:#777;letter-spacing:1.2px;padding-left:1.2px;-webkit-text-stroke:0.3px #777">--</div>
<div class="abs" style="left:1024.0px;width:300px;text-align:center;top:781.80px;font-size:13px;line-height:13px;white-space:nowrap;color:#757575;letter-spacing:-0.15px;-webkit-text-stroke:0.35px #757575">ARS 100.00</div>
<div class="abs" style="left:1251.0px;width:300px;text-align:center;top:781.80px;font-size:13px;line-height:13px;white-space:nowrap;color:#757575;letter-spacing:-0.15px;-webkit-text-stroke:0.45px #757575">ARS 101.05</div>
<div class="abs" style="left:1564px;top:769px;width:96px;height:40px;background:#f5f9f6;border-radius:9px"></div>
<div class="abs" style="left:1462.0px;width:300px;text-align:center;top:774.92px;font-size:12.5px;line-height:12.5px;white-space:nowrap;color:#3f8b6c;letter-spacing:0.35px;-webkit-text-stroke:0.25px #3f8b6c">Aprobada con</div>
<div class="abs" style="left:1462.0px;width:300px;text-align:center;top:791.02px;font-size:12.5px;line-height:12.5px;white-space:nowrap;color:#3f8b6c;letter-spacing:0.1px;-webkit-text-stroke:0.25px #3f8b6c">financiamiento</div>
<div class="abs" style="left:1747px;top:777px;width:32px;height:24px;background:#fde99d;border-radius:6px"></div>
<svg class="abs" style="left:1756.5px;top:782px" width="13" height="12" viewBox="0 0 13 12"><path d="M6.5 1.2V8.4M3.7 5.7L6.5 8.5L9.3 5.7" fill="none" stroke="#2e2e32" stroke-width="1.65"/><path d="M2.3 9.2H4.8L6.5 10.7L8.2 9.2H10.7A1.85 1.85 0 0 1 10.7 12.9H2.3A1.85 1.85 0 0 1 2.3 9.2Z" fill="#2e2e32"/></svg>
<div class="abs" style="left:328px;top:821px;width:1504px;height:50px;background:#fff;border:1px solid #cfcfcf;border-radius:8px"></div>
<div class="abs" style="left:277.0px;width:300px;text-align:center;top:838.80px;font-size:13px;line-height:13px;white-space:nowrap;color:#777;letter-spacing:0.12px;-webkit-text-stroke:0.2px #777">44444-44444447</div>
<div class="abs" style="left:448.0px;width:300px;text-align:center;top:838.80px;font-size:13px;line-height:13px;white-space:nowrap;color:#777;-webkit-text-stroke:0.2px #777">Ancla L</div>
<div class="abs" style="left:629.0px;width:300px;text-align:center;top:838.80px;font-size:13px;line-height:13px;white-space:nowrap;color:#777;letter-spacing:0.2px;-webkit-text-stroke:0.2px #777">23/04/2025</div>
<div class="abs" style="left:831.0px;width:300px;text-align:center;top:838.80px;font-size:13px;line-height:13px;white-space:nowrap;color:#777;letter-spacing:1.2px;padding-left:1.2px;-webkit-text-stroke:0.3px #777">--</div>
<div class="abs" style="left:1024.0px;width:300px;text-align:center;top:838.80px;font-size:13px;line-height:13px;white-space:nowrap;color:#757575;letter-spacing:-0.15px;-webkit-text-stroke:0.35px #757575">ARS 100.00</div>
<div class="abs" style="left:1251.0px;width:300px;text-align:center;top:838.80px;font-size:13px;line-height:13px;white-space:nowrap;color:#757575;letter-spacing:-0.15px;-webkit-text-stroke:0.45px #757575">ARS 101.05</div>
<div class="abs" style="left:1564px;top:826px;width:96px;height:40px;background:#f5f9f6;border-radius:9px"></div>
<div class="abs" style="left:1462.0px;width:300px;text-align:center;top:831.92px;font-size:12.5px;line-height:12.5px;white-space:nowrap;color:#3f8b6c;letter-spacing:0.35px;-webkit-text-stroke:0.25px #3f8b6c">Aprobada con</div>
<div class="abs" style="left:1462.0px;width:300px;text-align:center;top:848.02px;font-size:12.5px;line-height:12.5px;white-space:nowrap;color:#3f8b6c;letter-spacing:0.1px;-webkit-text-stroke:0.25px #3f8b6c">financiamiento</div>
<div class="abs" style="left:1747px;top:834px;width:32px;height:24px;background:#fde99d;border-radius:6px"></div>
<svg class="abs" style="left:1756.5px;top:839px" width="13" height="12" viewBox="0 0 13 12"><path d="M6.5 1.2V8.4M3.7 5.7L6.5 8.5L9.3 5.7" fill="none" stroke="#2e2e32" stroke-width="1.65"/><path d="M2.3 9.2H4.8L6.5 10.7L8.2 9.2H10.7A1.85 1.85 0 0 1 10.7 12.9H2.3A1.85 1.85 0 0 1 2.3 9.2Z" fill="#2e2e32"/></svg>
<div class="abs" style="left:328px;top:878px;width:1504px;height:50px;background:#fff;border:1px solid #cfcfcf;border-radius:8px"></div>
<div class="abs" style="left:277.0px;width:300px;text-align:center;top:895.80px;font-size:13px;line-height:13px;white-space:nowrap;color:#777;letter-spacing:0.12px;-webkit-text-stroke:0.2px #777">44444-44444446</div>
<div class="abs" style="left:448.0px;width:300px;text-align:center;top:895.80px;font-size:13px;line-height:13px;white-space:nowrap;color:#777;-webkit-text-stroke:0.2px #777">Ancla L</div>
<div class="abs" style="left:629.0px;width:300px;text-align:center;top:895.80px;font-size:13px;line-height:13px;white-space:nowrap;color:#777;letter-spacing:0.2px;-webkit-text-stroke:0.2px #777">23/04/2025</div>
<div class="abs" style="left:831.0px;width:300px;text-align:center;top:895.80px;font-size:13px;line-height:13px;white-space:nowrap;color:#777;letter-spacing:1.2px;padding-left:1.2px;-webkit-text-stroke:0.3px #777">--</div>
<div class="abs" style="left:1024.0px;width:300px;text-align:center;top:895.80px;font-size:13px;line-height:13px;white-space:nowrap;color:#757575;letter-spacing:-0.15px;-webkit-text-stroke:0.35px #757575">ARS 100.00</div>
<div class="abs" style="left:1251.0px;width:300px;text-align:center;top:895.80px;font-size:13px;line-height:13px;white-space:nowrap;color:#757575;letter-spacing:-0.15px;-webkit-text-stroke:0.45px #757575">ARS 101.05</div>
<div class="abs" style="left:1564px;top:883px;width:96px;height:40px;background:#f5f9f6;border-radius:9px"></div>
<div class="abs" style="left:1462.0px;width:300px;text-align:center;top:888.92px;font-size:12.5px;line-height:12.5px;white-space:nowrap;color:#3f8b6c;letter-spacing:0.35px;-webkit-text-stroke:0.25px #3f8b6c">Aprobada con</div>
<div class="abs" style="left:1462.0px;width:300px;text-align:center;top:905.02px;font-size:12.5px;line-height:12.5px;white-space:nowrap;color:#3f8b6c;letter-spacing:0.1px;-webkit-text-stroke:0.25px #3f8b6c">financiamiento</div>
<div class="abs" style="left:1747px;top:891px;width:32px;height:24px;background:#fde99d;border-radius:6px"></div>
<svg class="abs" style="left:1756.5px;top:896px" width="13" height="12" viewBox="0 0 13 12"><path d="M6.5 1.2V8.4M3.7 5.7L6.5 8.5L9.3 5.7" fill="none" stroke="#2e2e32" stroke-width="1.65"/><path d="M2.3 9.2H4.8L6.5 10.7L8.2 9.2H10.7A1.85 1.85 0 0 1 10.7 12.9H2.3A1.85 1.85 0 0 1 2.3 9.2Z" fill="#2e2e32"/></svg>
</body></html>
